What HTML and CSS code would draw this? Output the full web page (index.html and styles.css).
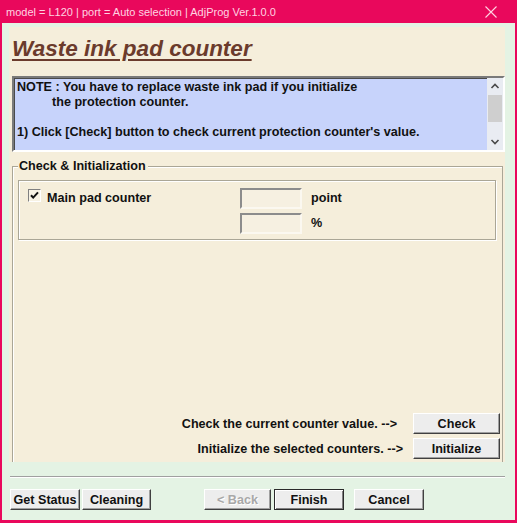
FILE: index.html
```html
<!DOCTYPE html>
<html lang="en">
<head>
    <meta charset="UTF-8">
    <meta name="viewport" content="width=device-width, initial-scale=1.0">
    <title>Waste ink pad counter</title>
    <link rel="stylesheet" href="styles.css">
</head>
<body>

    <div class="window">
        <div class="titlebar">
            <span class="caption">model = L120 | port = Auto selection | AdjProg Ver.1.0.0</span>
            <svg class="close" width="12" height="12" viewBox="0 0 12 12">
                <path d="M0.5 0.5L11.5 11.5M11.5 0.5L0.5 11.5" stroke="#ffd3e2" stroke-width="1.1" fill="none"/>
            </svg>
        </div>

        <div class="client">
            <div class="sheet">
                <h1>Waste ink pad counter</h1>

                <!-- read-only note with its scroll bar -->
                <div class="note">
                    <div class="note-text">
                        <p>NOTE : You have to replace waste ink pad if you initialize</p>
                        <p class="indent">the protection counter.</p>
                        <p>&nbsp;</p>
                        <p>1) Click [Check] button to check current protection counter's value.</p>
                    </div>
                    <div class="scrollbar">
                        <span class="arrow">
                            <svg width="16" height="16" viewBox="0 0 16 16"><path d="M4.5 10L8 6.5L11.5 10" stroke="#4a4a4a" stroke-width="1.6" fill="none"/></svg>
                        </span>
                        <span class="thumb"></span>
                        <span class="track"></span>
                        <span class="arrow">
                            <svg width="16" height="16" viewBox="0 0 16 16"><path d="M4.5 6L8 9.5L11.5 6" stroke="#4a4a4a" stroke-width="1.6" fill="none"/></svg>
                        </span>
                    </div>
                </div>

                <fieldset class="group">
                    <legend>Check &amp; Initialization</legend>

                    <div class="counters">
                        <label class="check">
                            <span class="box">
                                <svg width="11" height="11" viewBox="0 0 11 11"><path d="M2 5.2L4.2 7.6L9 2.4" stroke="#111" stroke-width="2" fill="none"/></svg>
                            </span>
                            Main pad counter
                        </label>
                        <span class="field"></span>
                        <span class="unit">point</span>
                        <span></span>
                        <span class="field"></span>
                        <span class="unit">%</span>
                    </div>

                    <div class="actions">
                        <div class="action">
                            <span>Check the current counter value. --&gt;</span>
                            <button class="btn btn-wide">Check</button>
                        </div>
                        <div class="action action-init">
                            <span>Initialize the selected counters. --&gt;</span>
                            <button class="btn btn-wide">Initialize</button>
                        </div>
                    </div>
                </fieldset>
            </div>

            <div class="footer">
                <div class="rule"></div>
                <div class="buttons">
                    <button class="btn">Get Status</button>
                    <button class="btn btn-cleaning">Cleaning</button>
                    <button class="btn btn-back" disabled>&lt; Back</button>
                    <button class="btn btn-finish">Finish</button>
                    <button class="btn btn-cancel">Cancel</button>
                </div>
            </div>
        </div>
    </div>

</body>
</html>
```

FILE: styles.css
```css
body {
    margin: 0;
    font-family: "Liberation Sans", Arial, sans-serif;
    background-color: #e4f3e4;
}

.window {
    width: 517px;
    height: 523px;
    box-sizing: border-box;
    background-color: #e9085c;
    padding: 0 2px 3px 2px;
    display: flex;
    flex-direction: column;
}

.titlebar {
    height: 23px;
    flex: none;
    display: flex;
    align-items: center;
    justify-content: space-between;
    padding: 0 18px 0 4px;
    color: #ffd3e2;
    font-size: 11px;
}

.client {
    flex: 1;
    background-color: #e4f3e4;
    display: flex;
    flex-direction: column;
    padding: 4px 10px 0 7px;
}

.sheet {
    height: 435px;
    box-sizing: border-box;
    background-color: #f5eedb;
    padding-left: 3px;
    display: flex;
    flex-direction: column;
}

h1 {
    margin: 0;
    height: 49px;
    box-sizing: border-box;
    padding-top: 9px;
    font-size: 22.5px;
    line-height: 26px;
    font-style: italic;
    font-weight: bold;
    color: #6b3b2c;
    text-decoration: underline;
    text-decoration-thickness: 2px;
    text-underline-offset: 3px;
}

/* note box */

.note {
    height: 76px;
    box-sizing: border-box;
    border: 2px solid;
    border-color: #7a7a7a #ffffff #ffffff #7a7a7a;
    box-shadow: inset 1px 1px 0 #4a4a4a;
    background-color: #c7d3fb;
    display: flex;
}

.note-text {
    flex: 1;
    padding: 2px 3px;
    font-size: 12.6px;
    font-weight: bold;
    line-height: 15px;
    color: #111;
}

.note-text p {
    margin: 0;
}

.note-text .indent {
    padding-left: 35px;
}

.scrollbar {
    width: 16px;
    display: flex;
    flex-direction: column;
    background-color: #e9ecf2;
}

.scrollbar .arrow {
    height: 16px;
    display: block;
}

.scrollbar .thumb {
    height: 27px;
    margin: 1px 1px 0 1px;
    background-color: #cfcfcf;
}

.scrollbar .track {
    flex: 1;
}

/* group box */

.group {
    flex: 1;
    min-width: 0;
    margin: 7px 2px 0 0;
    padding: 0 2px 3px 5px;
    border: 1px solid #aaa696;
    border-bottom: none;
    box-shadow: inset 1px 1px 0 #ffffff;
    font-size: 12.6px;
    font-weight: bold;
    color: #111;
}

.group legend {
    padding: 0 2px 0 1px;
    line-height: 14px;
    background-color: #f5eedb;
}

.counters {
    margin: 7px 4px 0 0;
    padding: 7px 0 5px 9px;
    border: 1px solid #aaa696;
    box-shadow: inset 1px 1px 0 #ffffff, 1px 1px 0 #ffffff;
    display: grid;
    grid-template-columns: 203px 62px auto;
    gap: 4px 9px;
}

.check {
    display: flex;
    align-items: flex-start;
    gap: 6px;
    line-height: 21px;
}

.check .box {
    width: 13px;
    height: 13px;
    margin-top: 1px;
    box-sizing: border-box;
    border: 1px solid;
    border-color: #808080 #ffffff #ffffff #808080;
    background-color: #f7f2e4;
    display: flex;
    align-items: center;
    justify-content: center;
}

.field {
    height: 21px;
    box-sizing: border-box;
    border: 2px solid;
    border-color: #8c8c8c #fbf8f0 #fbf8f0 #8c8c8c;
    background-color: #f6f0e1;
}

.unit {
    line-height: 21px;
}

.actions {
    margin-top: 173px;
    display: flex;
    flex-direction: column;
    gap: 4px;
}

.action {
    display: flex;
    justify-content: flex-end;
    align-items: center;
    gap: 16px;
}

.action-init {
    gap: 10px;
}

/* buttons */

.btn {
    height: 21px;
    width: 70px;
    padding: 0;
    font-family: "Liberation Sans", Arial, sans-serif;
    font-size: 12.6px;
    font-weight: bold;
    color: #111;
    background-color: #ededed;
    border: 1px solid;
    border-color: #ffffff #404040 #404040 #ffffff;
    box-shadow: inset -1px -1px 0 #a0a0a0;
}

.btn-wide {
    width: 87px;
}

.btn-cleaning {
    width: 69px;
    margin-left: 2px;
}

.btn-back {
    width: 67px;
    margin-left: 53px;
    color: #a8a8a8;
    text-shadow: 1px 1px 0 #ffffff;
}

.btn-finish {
    margin-left: 3px;
    border-color: #2a2a2a;
    box-shadow: inset 1px 1px 0 #ffffff, inset -1px -1px 0 #808080;
}

.btn-cancel {
    margin-left: 10px;
}

.footer {
    padding: 14px 0 0 1px;
}

.rule {
    border-top: 1px solid #a0a0a0;
    border-bottom: 1px solid #ffffff;
    margin-bottom: 11px;
}

.buttons {
    display: flex;
}
```
